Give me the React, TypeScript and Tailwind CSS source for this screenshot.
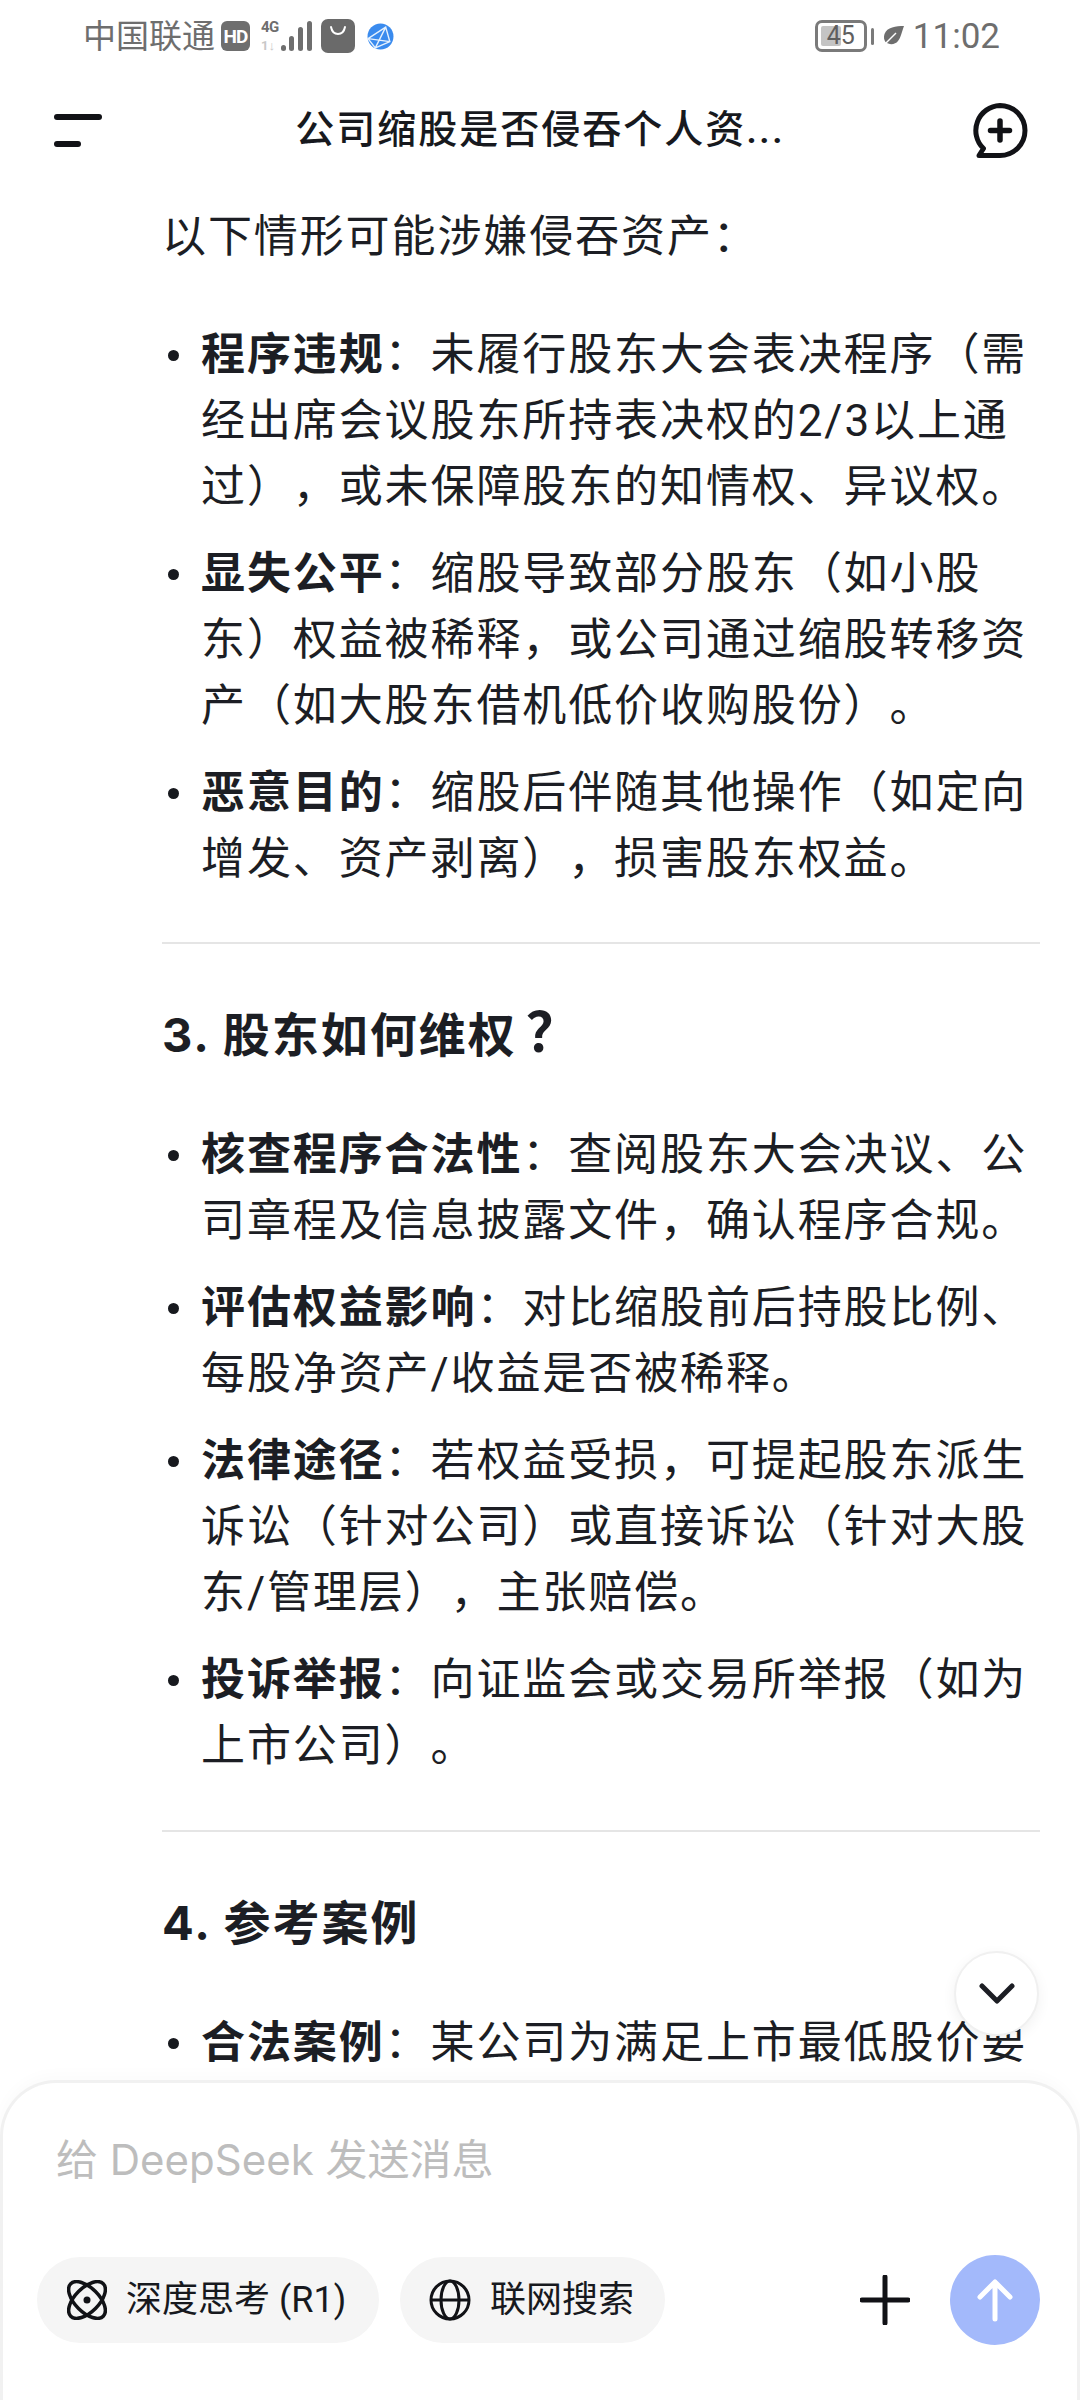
import React from "react";

const cjk = "font-['Roboto','Noto_Sans_CJK_SC',sans-serif]";
const inter = "font-['Inter','Noto_Sans_CJK_SC',sans-serif]";

type Item = { bold: string; lines: string[] };

function Bullets({ items }: { items: Item[] }) {
  return (
    <ul className="flex flex-col gap-[21px]">
      {items.map((item) => (
        <li key={item.bold} className="relative pl-[39px]">
          <span className="absolute left-[6px] top-[28px] h-[11px] w-[11px] rounded-full bg-[#17191e]" />
          {item.lines.map((line, i) => (
            <div key={i} className="h-[66px] whitespace-nowrap leading-[66px]">
              {i === 0 && <strong className="font-bold">{item.bold}</strong>}
              {line}
            </div>
          ))}
        </li>
      ))}
    </ul>
  );
}

function StatusBar() {
  return (
    <div className="flex h-[72px] items-center justify-between pl-[83px] pr-[80px] text-[#6e6e6e]">
      <div className="flex items-center">
        <span className={`${cjk} text-[33px] leading-none`}>中国联通</span>
        <span className="ml-[6px] flex h-[30px] w-[29px] items-center justify-center rounded-[6px] bg-[#6e6e6e] font-['Roboto',sans-serif] text-[19px] font-bold leading-none tracking-[-1px] text-white">
          HD
        </span>
        <div className="ml-[11px] flex h-[32px] w-[18px] flex-col items-start font-['Roboto',sans-serif] font-bold leading-none">
          <span className="text-[15px] leading-[15px] tracking-[-0.5px]">4G</span>
          <span className="mt-[4px] text-[13px] leading-[13px] text-[#c8c8c8]">1↓</span>
        </div>
        <svg width="32" height="32" viewBox="0 0 32 32" className="ml-[1px]" fill="#6e6e6e">
          <rect x="1" y="25" width="5" height="6" rx="2.500" />
          <rect x="9" y="16" width="5" height="15" rx="2.500" />
          <rect x="18" y="7" width="5" height="24" rx="2.500" />
          <rect x="27" y="1" width="5" height="30" rx="2.500" />
        </svg>
        <svg width="34" height="34" viewBox="0 0 34 34" className="ml-[9px]">
          <rect width="34" height="34" rx="7" fill="#6a6a6a" />
          <path d="M10 8c1 5 4 7 7 7s6-2 7-7" fill="none" stroke="#fff" strokeWidth="2" strokeLinecap="round" />
        </svg>
        <svg width="27" height="27" viewBox="0 0 26 26" className="ml-[12px]">
          <circle cx="13" cy="13" r="12.500" fill="#3a8bee" />
          <path d="M1 15 18 4l4 14-14 6ZM18 4 8 24M1 15l21 3" fill="none" stroke="#e6f1fd" strokeWidth="1.300" />
        </svg>
      </div>
      <div className="flex items-center">
        <div className="relative flex h-[32px] w-[52px] items-center rounded-[7px] border-[3px] border-[#7a7a7a] p-[3px]">
          <span className="h-full w-[20px] rounded-[2px] bg-[#c4c4c4]" />
          <span className="absolute inset-0 text-center font-['Roboto',sans-serif] text-[25px] leading-[26px] text-[#5f5f5f]">45</span>
        </div>
        <span className="ml-[4px] h-[17px] w-[3px] rounded-full bg-[#7a7a7a]" />
        <svg width="22" height="22" viewBox="0 0 22 22" className="ml-[8px]" fill="#6e6e6e">
          <path d="M22 1C14 1 5 2 2.500 9 1.500 12 2 15 3.500 17 7 20 13 20 16 16 19 12.500 20 6 22 1Z" />
          <path d="M1 21 14 8" stroke="#fff" strokeWidth="1.500" fill="none" />
        </svg>
        <span className="ml-[9px] font-['Roboto',sans-serif] text-[35px] leading-none">11:02</span>
      </div>
    </div>
  );
}

function Header() {
  return (
    <div className="grid h-[116px] grid-cols-[1fr_auto_1fr] items-center">
      <div className="ml-[54px] flex flex-col gap-[21px]">
        <span className="h-[6px] w-[48px] rounded-full bg-[#111216]" />
        <span className="h-[6px] w-[27px] rounded-full bg-[#111216]" />
      </div>
      <div className={`${cjk} text-[39px] font-medium leading-none tracking-[2px] text-[#17191e]`}>公司缩股是否侵吞个人资...</div>
      <svg width="56" height="56" viewBox="0 0 56 56" className="mr-[52px] mt-[2px] justify-self-end" fill="none" stroke="#111216" strokeLinecap="round" strokeLinejoin="round">
        <path d="M28 2.500a25 25 0 0 1 0 50H7l4.500-7A25 25 0 0 1 28 2.500Z" strokeWidth="5" />
        <path d="M28 18v19M18.500 27.500h19" strokeWidth="5.500" />
      </svg>
    </div>
  );
}

function AtomIcon() {
  return (
    <svg width="40" height="40" viewBox="0 0 40 40" fill="none" stroke="#111216" strokeWidth="3.500">
      <ellipse cx="20" cy="20" rx="23" ry="12" transform="rotate(45 20 20)" />
      <ellipse cx="20" cy="20" rx="23" ry="12" transform="rotate(-45 20 20)" />
      <circle cx="20" cy="20" r="3.500" fill="#111216" stroke="none" />
    </svg>
  );
}

function GlobeIcon() {
  return (
    <svg width="42" height="42" viewBox="0 0 42 42" fill="none" stroke="#111216" strokeWidth="3">
      <circle cx="21" cy="21" r="19" />
      <ellipse cx="21" cy="21" rx="9" ry="19" />
      <path d="M2 21h38" />
    </svg>
  );
}

function Composer() {
  return (
    <div className="mt-[17px] h-[320px] rounded-t-[56px] border-x-[3px] border-t-[3px] border-[#f1f1f1] bg-white pl-[34px] shadow-[0_-6px_14px_rgba(0,0,0,0.02)]">
      <div className={`${inter} pl-[19px] pt-[49px] text-[42px] leading-[56px] text-[#bdbdbd]`}>给 DeepSeek 发送消息</div>
      <div className="mt-[67px] flex items-center pr-[37px]">
        <div className="flex h-[86px] w-[342px] items-center rounded-full bg-[#f5f5f5] pl-[30px]">
          <AtomIcon />
          <span className={`${cjk} ml-[19px] text-[36px] leading-none text-[#17191e]`}>深度思考 (R1)</span>
        </div>
        <div className="ml-[21px] flex h-[86px] w-[265px] items-center rounded-full bg-[#f5f5f5] pl-[29px]">
          <GlobeIcon />
          <span className={`${cjk} ml-[19px] text-[36px] leading-none text-[#17191e]`}>联网搜索</span>
        </div>
        <svg width="50" height="50" viewBox="0 0 50 50" className="ml-auto" stroke="#111216" strokeWidth="5" strokeLinecap="round">
          <path d="M25 2v46M2 25h46" />
        </svg>
        <div className="ml-[40px] flex h-[90px] w-[90px] items-center justify-center rounded-full bg-[#a3b9fb]">
          <svg width="36" height="44" viewBox="0 0 36 44" fill="none" stroke="#fff" strokeWidth="5" strokeLinecap="round" strokeLinejoin="round">
            <path d="M18 41V4M3 19 18 4l15 15" />
          </svg>
        </div>
      </div>
    </div>
  );
}

function Heading({ children, mark }: { children: React.ReactNode; mark?: string }) {
  return (
    <h3 className={`${inter} mb-[54px] h-[66px] text-[47px] font-bold leading-[66px] tracking-[2px]`}>
      {children}
      {mark && <span className="ml-[9px] text-[54px] leading-none">{mark}</span>}
    </h3>
  );
}

export default function App() {
  return (
    <div className="relative flex h-[2400px] w-[1080px] flex-col overflow-hidden bg-white">
      <StatusBar />
      <Header />
      <div className={`${cjk} min-h-0 flex-1 overflow-hidden pl-[162px] pr-[40px] pt-[16px] text-[44px] tracking-[1.900px] text-[#1c1e24] [text-spacing-trim:space-all]`} lang="zh-CN">
        <p className="mb-[52px] h-[66px] leading-[66px]">以下情形可能涉嫌侵吞资产：</p>
        <Bullets
          items={[
            { bold: "程序违规", lines: ["：未履行股东大会表决程序（需", "经出席会议股东所持表决权的2/3以上通", "过），或未保障股东的知情权、异议权。"] },
            { bold: "显失公平", lines: ["：缩股导致部分股东（如小股", "东）权益被稀释，或公司通过缩股转移资", "产（如大股东借机低价收购股份）。"] },
            { bold: "恶意目的", lines: ["：缩股后伴随其他操作（如定向", "增发、资产剥离），损害股东权益。"] },
          ]}
        />
        <hr className="mb-[58px] mt-[50px] border-t-[2px] border-[#e5e5e5]" />
        <Heading mark="？">3. 股东如何维权</Heading>
        <Bullets
          items={[
            { bold: "核查程序合法性", lines: ["：查阅股东大会决议、公", "司章程及信息披露文件，确认程序合规。"] },
            { bold: "评估权益影响", lines: ["：对比缩股前后持股比例、", "每股净资产/收益是否被稀释。"] },
            { bold: "法律途径", lines: ["：若权益受损，可提起股东派生", "诉讼（针对公司）或直接诉讼（针对大股", "东/管理层），主张赔偿。"] },
            { bold: "投诉举报", lines: ["：向证监会或交易所举报（如为", "上市公司）。"] },
          ]}
        />
        <hr className="mb-[58px] mt-[51px] border-t-[2px] border-[#e5e5e5]" />
        <Heading>4. 参考案例</Heading>
        <Bullets items={[{ bold: "合法案例", lines: ["：某公司为满足上市最低股价要"] }]} />
      </div>
      <Composer />
      <div className="absolute left-[954px] top-[1951px] flex h-[85px] w-[85px] items-center justify-center rounded-full border-[2px] border-[#f0f0f0] bg-white shadow-[0_4px_14px_rgba(0,0,0,0.06)]">
        <svg width="36" height="24" viewBox="0 0 36 24" fill="none" stroke="#1c1e24" strokeWidth="5" strokeLinecap="round" strokeLinejoin="round">
          <path d="M3 4l15 15L33 4" />
        </svg>
      </div>
    </div>
  );
}
